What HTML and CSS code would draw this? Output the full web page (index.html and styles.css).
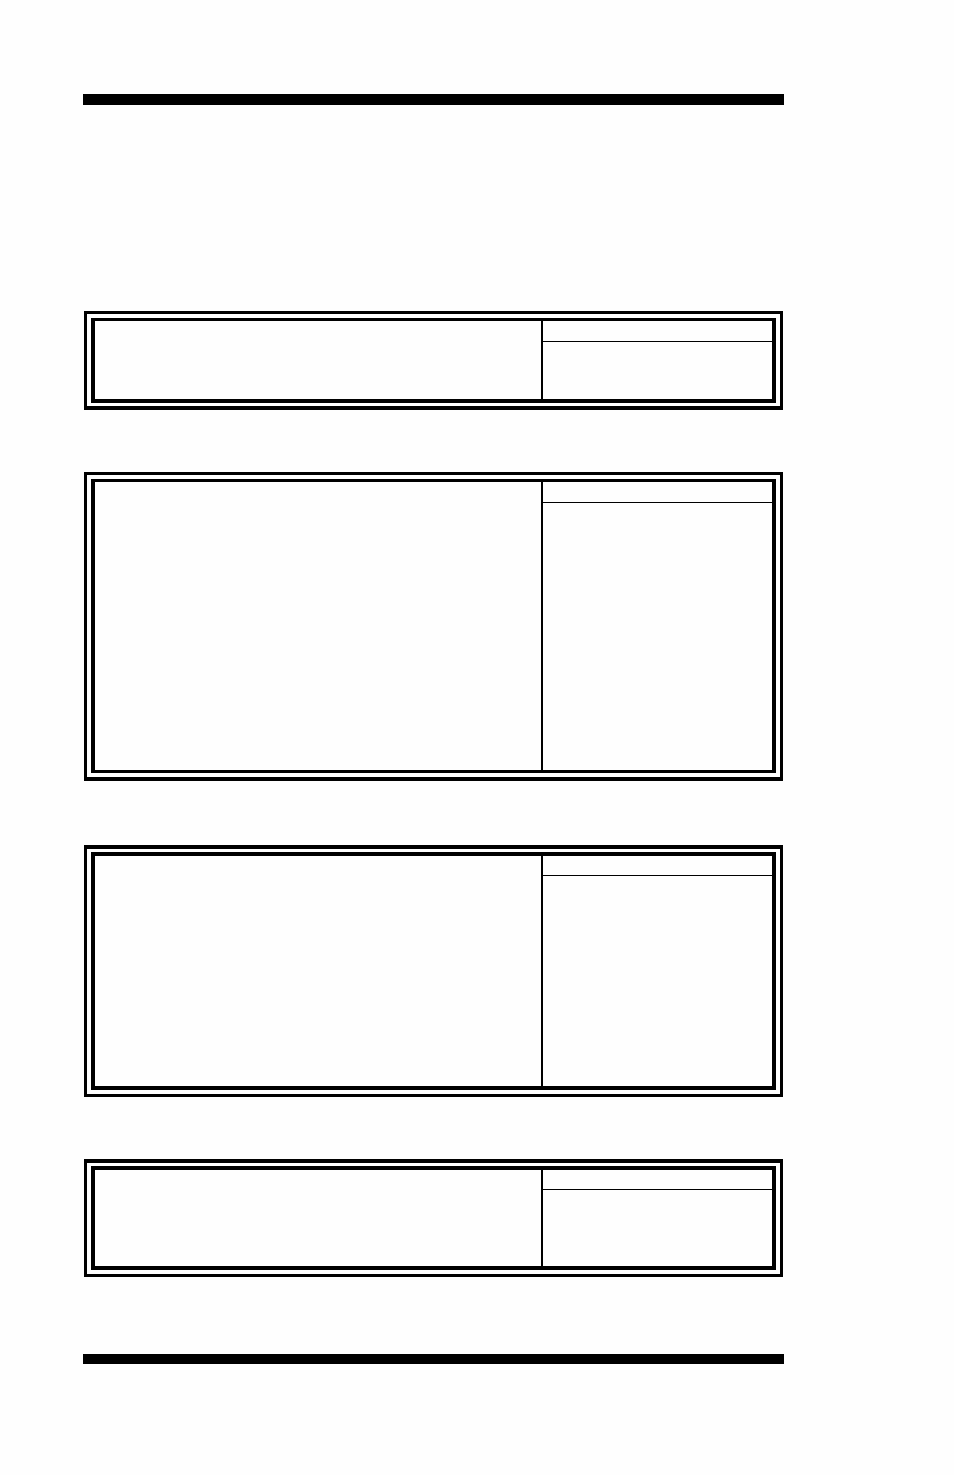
FILE: index.html
```
<!DOCTYPE html>
<html lang="en">
<head>
  <meta charset="UTF-8" />
  <meta name="viewport" content="width=device-width, initial-scale=1.0"/>
  <title>Worksheet</title>
  <link rel="stylesheet" href="styles.css">
</head>
<body>

<main class="page">
  <div class="rule rule-top"></div>

  <div class="frames">
    <section class="frame light">
      <div class="panel short">
        <div class="main-cell"></div>
        <div class="side">
          <div class="side-head"></div>
          <div class="side-body"></div>
        </div>
      </div>
    </section>

    <section class="frame light even">
      <div class="panel tall">
        <div class="main-cell"></div>
        <div class="side">
          <div class="side-head"></div>
          <div class="side-body"></div>
        </div>
      </div>
    </section>

    <section class="frame heavy">
      <div class="panel medium">
        <div class="main-cell"></div>
        <div class="side">
          <div class="side-head"></div>
          <div class="side-body"></div>
        </div>
      </div>
    </section>

    <section class="frame heavy">
      <div class="panel low">
        <div class="main-cell"></div>
        <div class="side">
          <div class="side-head"></div>
          <div class="side-body"></div>
        </div>
      </div>
    </section>
  </div>

  <div class="rule rule-bottom"></div>
</main>

</body>
</html>
```
FILE: styles.css
```
* {
  box-sizing: border-box;
}
body {
  font-family: "Liberation Sans", Arial, sans-serif;
  background-color: #fefefe;
  margin: 0;
  color: #000;
}
.page {
  padding: 94px 170px 111px 83px;
}

/* heavy bars at the head and foot of the page */
.rule {
  background-color: #000;
}
.rule-top {
  height: 11px;
  margin-bottom: 206px;
}
.rule-bottom {
  height: 10px;
  margin-top: 77px;
}
.frames {
  display: flex;
  flex-direction: column;
  gap: 62px;
  padding: 0 1px;
}

/* double border: frame outside, panel inside */
.frame {
  border: 3px solid #000;
  padding: 4px;
}
.panel {
  display: grid;
  grid-template-columns: 446fr 231fr;
  border: 4px solid #000;
}
.light {
  border-bottom-width: 4px;
  padding-bottom: 3px;
}
.light .panel {
  border-top-width: 3px;
}
.even {
  padding-bottom: 4px;
  margin-bottom: 2px;
}
.even .panel {
  border-bottom-width: 3px;
}
.heavy {
  border-top-width: 4px;
  padding-top: 3px;
}

.short {
  min-height: 85px;
}
.tall {
  min-height: 294px;
}
.medium {
  min-height: 238px;
}
.low {
  min-height: 104px;
}

.side {
  display: flex;
  flex-direction: column;
  border-left: 2px solid #000;
}
.side-head {
  height: 21px;
  border-bottom: 1px solid #000;
}
.heavy .side-head {
  height: 20px;
}
.side-body {
  flex: 1;
}
```
